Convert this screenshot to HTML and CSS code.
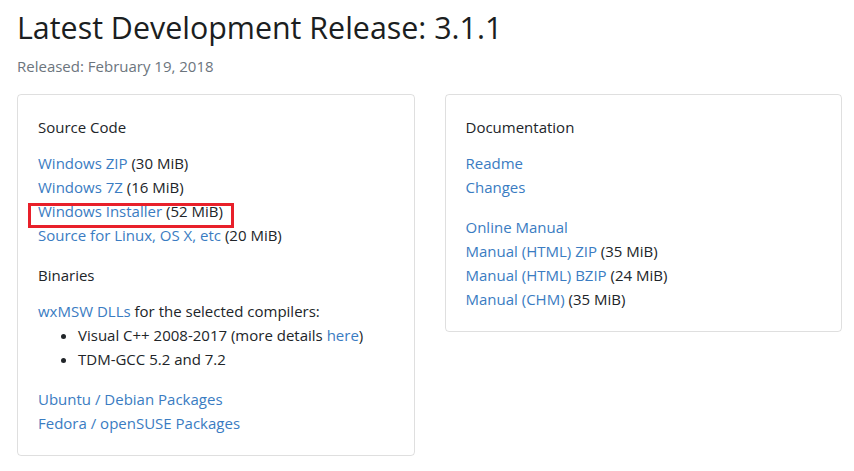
FILE: index.html
```html
<!DOCTYPE html>
<html lang="en">
<head>
<meta charset="utf-8">
<title>Latest Development Release: 3.1.1</title>
<link rel="stylesheet" href="styles.css">
</head>
<body>
<main class="page">
  <h1 class="title">Latest Development Release: 3.1.1</h1>
  <p class="released">Released: February 19, 2018</p>
  <div class="cards">
    <section class="card">
      <p class="card-title">Source Code</p>
      <div class="group">
        <div><a href="#">Windows ZIP</a> (30 MiB)</div>
        <div><a href="#">Windows 7Z</a> (16 MiB)</div>
        <div><span class="highlight"><a href="#">Windows Installer</a> (52 MiB)</span></div>
        <div><a href="#">Source for Linux, OS X, etc</a> (20 MiB)</div>
      </div>
      <p class="card-title">Binaries</p>
      <div class="group">
        <div><a href="#">wxMSW DLLs</a> for the selected compilers:</div>
        <ul class="list">
          <li>Visual C++ 2008-2017 (more details <a href="#">here</a>)</li>
          <li>TDM-GCC 5.2 and 7.2</li>
        </ul>
      </div>
      <div class="group">
        <div><a href="#">Ubuntu / Debian Packages</a></div>
        <div><a href="#">Fedora / openSUSE Packages</a></div>
      </div>
    </section>
    <section class="card">
      <p class="card-title">Documentation</p>
      <div class="group">
        <div><a href="#">Readme</a></div>
        <div><a href="#">Changes</a></div>
      </div>
      <div class="group">
        <div><a href="#">Online Manual</a></div>
        <div><a href="#">Manual (HTML) ZIP</a> (35 MiB)</div>
        <div><a href="#">Manual (HTML) BZIP</a> (24 MiB)</div>
        <div><a href="#">Manual (CHM)</a> (35 MiB)</div>
      </div>
    </section>
  </div>
</main>
</body>
</html>
```
FILE: styles.css
```css
html, body {
  margin: 0;
  padding: 0;
  background: #ffffff;
}
body {
  font-family: "Open Sans", "Noto Sans", sans-serif;
  font-size: 15px;
  line-height: 24px;
  color: #212529;
}
.page {
  padding: 10px 12px 0 17px;
}
.title {
  margin: 0 0 8px;
  font-size: 30.4px;
  line-height: 36px;
  font-weight: 500;
  color: #1b1e21;
}
.released {
  margin: 0 0 16px;
  color: #6c757d;
}
.cards {
  display: flex;
  gap: 30px;
  align-items: flex-start;
}
.card {
  flex: 1 1 0;
  box-sizing: border-box;
  border: 1px solid rgba(0, 0, 0, 0.125);
  border-radius: 4px;
  padding: 20px;
  white-space: nowrap;
}
.card-title {
  margin: 0 0 12px;
}
.group {
  margin-bottom: 16px;
}
.group:last-child {
  margin-bottom: 0;
}
a {
  color: #3a7cc2;
  text-decoration: none;
}
.list {
  margin: 0;
  padding-left: 40px;
}
.highlight {
  position: relative;
}
.highlight::after {
  content: "";
  position: absolute;
  top: 2px;
  bottom: -7px;
  left: -10px;
  right: -11px;
  border: 3px solid #e8202a;
  pointer-events: none;
}
```
